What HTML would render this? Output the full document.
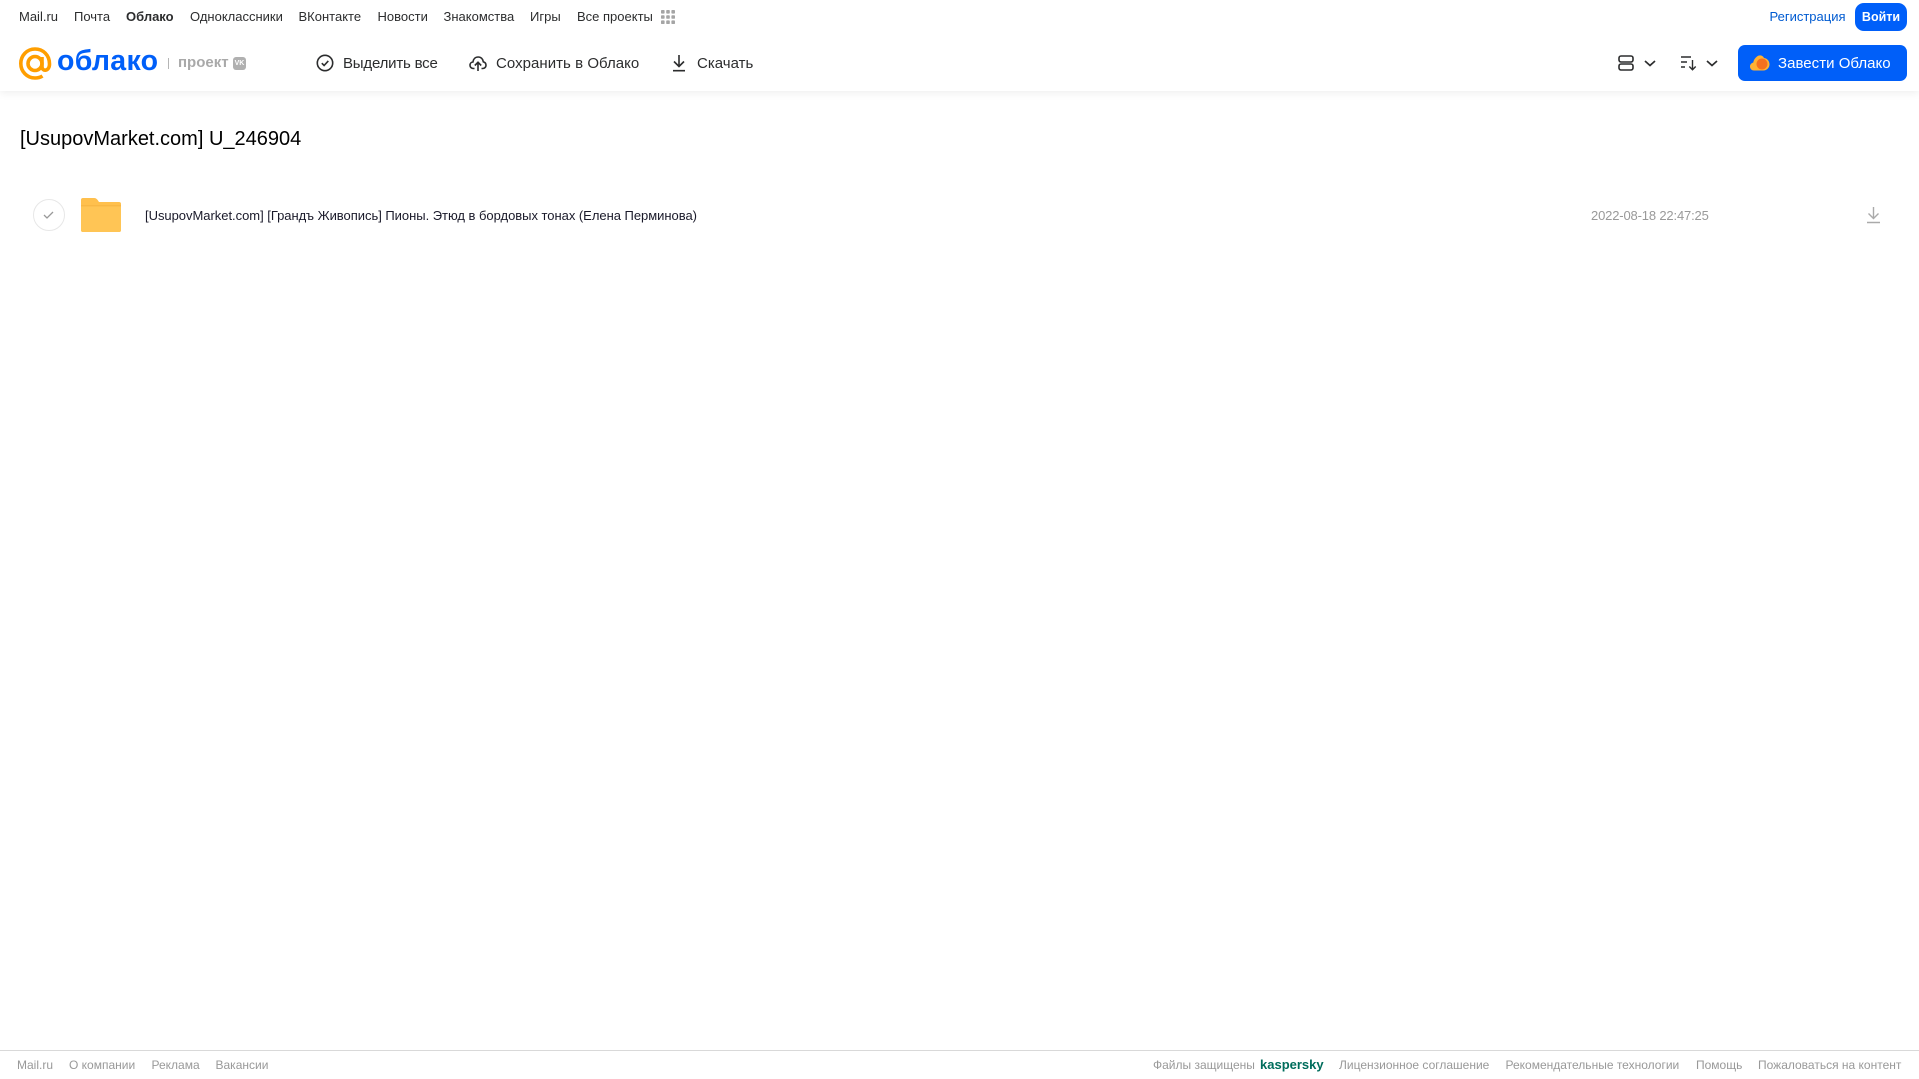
<!DOCTYPE html>
<html lang="ru"><head><meta charset="utf-8"><title>Облако</title>
<style>
html,body{margin:0;padding:0;background:#fff}
body{width:1919px;height:1079px;position:relative;overflow:hidden;font-family:"Liberation Sans",sans-serif}
.t{position:absolute;white-space:nowrap;line-height:20px;height:20px}
.n{font-size:13px;color:#2c2d2e;top:7px}
.a{font-size:15px;color:#2c2d2e;top:53px}
.f{font-size:12px;color:#999;top:1055px}
svg{position:absolute;overflow:visible}
</style></head><body>
<div style="position:absolute;left:0;top:0;width:1919px;height:91px;background:#fff;box-shadow:0 2px 8px rgba(0,0,0,.07)"></div>

<span class="t n" style="left:19px">Mail.ru</span>
<span class="t n" style="left:74px">Почта</span>
<span class="t n" style="left:126px;font-weight:bold">Облако</span>
<span class="t n" style="left:190px">Одноклассники</span>
<span class="t n" style="left:298.500px">ВКонтакте</span>
<span class="t n" style="left:377.500px">Новости</span>
<span class="t n" style="left:443.500px">Знакомства</span>
<span class="t n" style="left:530px">Игры</span>
<span class="t n" style="left:577px">Все проекты</span>
<svg style="left:660px;top:9px" width="16" height="16" fill="#a5a5a5"><rect x="1" y="1" width="3.6" height="3.6" rx=".8"/><rect x="6.2" y="1" width="3.6" height="3.6" rx=".8"/><rect x="11.4" y="1" width="3.6" height="3.6" rx=".8"/><rect x="1" y="6.2" width="3.6" height="3.6" rx=".8"/><rect x="6.2" y="6.2" width="3.6" height="3.6" rx=".8"/><rect x="11.4" y="6.2" width="3.6" height="3.6" rx=".8"/><rect x="1" y="11.4" width="3.6" height="3.6" rx=".8"/><rect x="6.2" y="11.4" width="3.6" height="3.6" rx=".8"/><rect x="11.4" y="11.4" width="3.6" height="3.6" rx=".8"/></svg>

<span class="t n" style="left:1769.500px;color:#005bd1">Регистрация</span>
<div style="position:absolute;left:1855px;top:3px;width:52px;height:28px;border-radius:9px;background:#005ff9;color:#fff;font-size:12.500px;font-weight:bold;line-height:28px;text-align:center">Войти</div>

<svg style="left:19px;top:47px" width="33" height="33" viewBox="0 0 33 33" fill="none" stroke="#ff9e00" stroke-width="3.600"><circle cx="16" cy="16.500" r="7"/><path d="M23 10v9.500c0 5.500 7.500 5 7.500-2.500C30.500 8 24 2 16 2S1.800 8.500 1.800 16.500 8 31 16 31c3 0 5.500-.7 7.500-2"/></svg>
<span class="t" style="left:57px;top:42px;height:38px;line-height:38px;font-size:28.500px;color:#005ff9;font-weight:bold;letter-spacing:.3px">облако</span>
<div style="position:absolute;left:168px;top:58px;width:1px;height:11px;background:#b5b5b5"></div>
<span class="t" style="left:178px;top:53px;font-size:15px;font-weight:bold;color:#a9a9a9">проект</span>
<div style="position:absolute;left:233px;top:57px;width:13px;height:13px;border-radius:3px;background:#b0b0b0;color:#fff;font-size:7px;font-weight:bold;line-height:13px;text-align:center">VK</div>

<svg style="left:316px;top:54px" width="18" height="18" viewBox="0 0 18 18" fill="none" stroke="#2c2d2e" stroke-width="1.6"><circle cx="9" cy="9" r="7.700"/><path d="M5.800 9.200l2.300 2.300 4.200-4.600"/></svg>
<span class="t a" style="left:343px;letter-spacing:-.2px;top:53.500px">Выделить все</span>
<svg style="left:469px;top:54px" width="18" height="18" viewBox="0 0 18 18" fill="none" stroke="#2c2d2e" stroke-width="1.600"><path d="M5.500 14.500H4.300C2.400 14.500 1 13 1 11.200 1 9.500 2.200 8.100 3.900 8 4.300 5 6.400 3 9.200 3c2.700 0 4.800 2 5.100 4.800 1.500.4 2.700 1.700 2.700 3.400 0 1.800-1.400 3.300-3.300 3.300h-1.200"/><path d="M9 17V8.500M5.800 11.500L9 8.300l3.200 3.200"/></svg>
<span class="t a" style="left:496px;letter-spacing:.04px;top:53.500px">Сохранить в Облако</span>
<svg style="left:671px;top:54px" width="16" height="18" viewBox="0 0 16 18" fill="none" stroke="#2c2d2e" stroke-width="1.600"><path d="M8 1v11M3 7.500l5 5 5-5M2 16.700h12"/></svg>
<span class="t a" style="left:697px;letter-spacing:.02px;top:53.500px">Скачать</span>

<svg style="left:1618px;top:55px" width="16" height="16" viewBox="0 0 16 16" fill="none" stroke="#2c2d2e" stroke-width="1.600"><rect x="1" y="1" width="14" height="6" rx="2"/><rect x="1" y="9" width="14" height="6" rx="2"/></svg>
<svg style="left:1644px;top:60px" width="12" height="7" fill="none" stroke="#2c2d2e" stroke-width="1.700"><path d="M1 1l5 4.500L11 1"/></svg>
<svg style="left:1681px;top:55px" width="16" height="16" viewBox="0 0 16 16" fill="none" stroke="#2c2d2e" stroke-width="1.400"><path d="M0 2h10M0 7h6M0 12h4M11.500 5v9.500M8.300 11.500l3.200 3.200 3.200-3.200"/></svg>
<svg style="left:1706px;top:60px" width="12" height="7" fill="none" stroke="#2c2d2e" stroke-width="1.700"><path d="M1 1l5 4.500L11 1"/></svg>

<div style="position:absolute;left:1738px;top:45px;width:169px;height:36px;border-radius:7px;background:#005ff9"></div>
<svg style="left:1750px;top:54px" width="20" height="18" viewBox="0 0 20 18"><path d="M4 16.500C1.800 16.500 0 14.800 0 12.500c0-2 1.400-3.600 3.200-3.900C3.700 6 5 4 7 2.500 9.500.5 13 1.500 14 4c3 .300 5.500 3 5.500 6.300 0 3.500-2.700 6.200-6 6.200z" fill="#ffb233"/><circle cx="12" cy="10" r="5.500" fill="#f4711f"/></svg>
<span class="t" style="left:1778px;top:53.500px;font-size:15px;color:#fff;letter-spacing:.03px">Завести Облако</span>

<span class="t" style="left:20px;top:127px;height:24px;line-height:24px;font-size:20px;color:#000">[UsupovMarket.com] U_246904</span>

<div style="position:absolute;left:33px;top:199px;width:30px;height:30px;border:1px solid #e7e7e7;border-radius:50%"></div>
<svg style="left:43px;top:210px" width="12" height="10" fill="none" stroke="#999" stroke-width="1.300"><path d="M1 5l3 3 6-6"/></svg>
<svg style="left:81px;top:198px" width="40" height="34" viewBox="0 0 40 34"><path d="M2 0h11c2 0 3 1 4 2.500L18 4h20a2 2 0 0 1 2 2v26a2 2 0 0 1-2 2H2a2 2 0 0 1-2-2V2a2 2 0 0 1 2-2z" fill="#ffc04d"/><path d="M0 8h40v24a2 2 0 0 1-2 2H2a2 2 0 0 1-2-2z" fill="#ffc555"/><path d="M0 7h40v1.500H0z" fill="#f5b441" opacity=".7"/></svg>
<span class="t" style="left:145px;top:206px;font-size:13px;color:#1a1a2a;letter-spacing:-.03px">[UsupovMarket.com] [Грандъ Живопись] Пионы. Этюд в бордовых тонах (Елена Перминова)</span>
<span class="t" style="left:1591px;top:206px;font-size:13px;color:#999;letter-spacing:-.16px">2022-08-18 22:47:25</span>
<svg style="left:1866px;top:206px" width="15" height="18" viewBox="0 0 15 18" fill="none" stroke="#aaa" stroke-width="1.400"><path d="M7.500 1v11M2.500 7.500l5 5 5-5M1 16.500h13"/></svg>

<div style="position:absolute;left:0;top:1050px;width:1919px;height:1px;background:#d9d9d9"></div>
<span class="t f" style="left:17px">Mail.ru</span>
<span class="t f" style="left:69px">О компании</span>
<span class="t f" style="left:151.500px">Реклама</span>
<span class="t f" style="left:215.500px">Вакансии</span>
<span class="t f" style="left:1153px">Файлы защищены</span>
<span class="t" style="left:1260px;top:1055px;font-size:13px;font-weight:bold;color:#006d5c">kaspersky</span>
<span class="t f" style="left:1339px">Лицензионное соглашение</span>
<span class="t f" style="left:1505.500px">Рекомендательные технологии</span>
<span class="t f" style="left:1696px">Помощь</span>
<span class="t f" style="left:1758px">Пожаловаться на контент</span>
</body></html>
